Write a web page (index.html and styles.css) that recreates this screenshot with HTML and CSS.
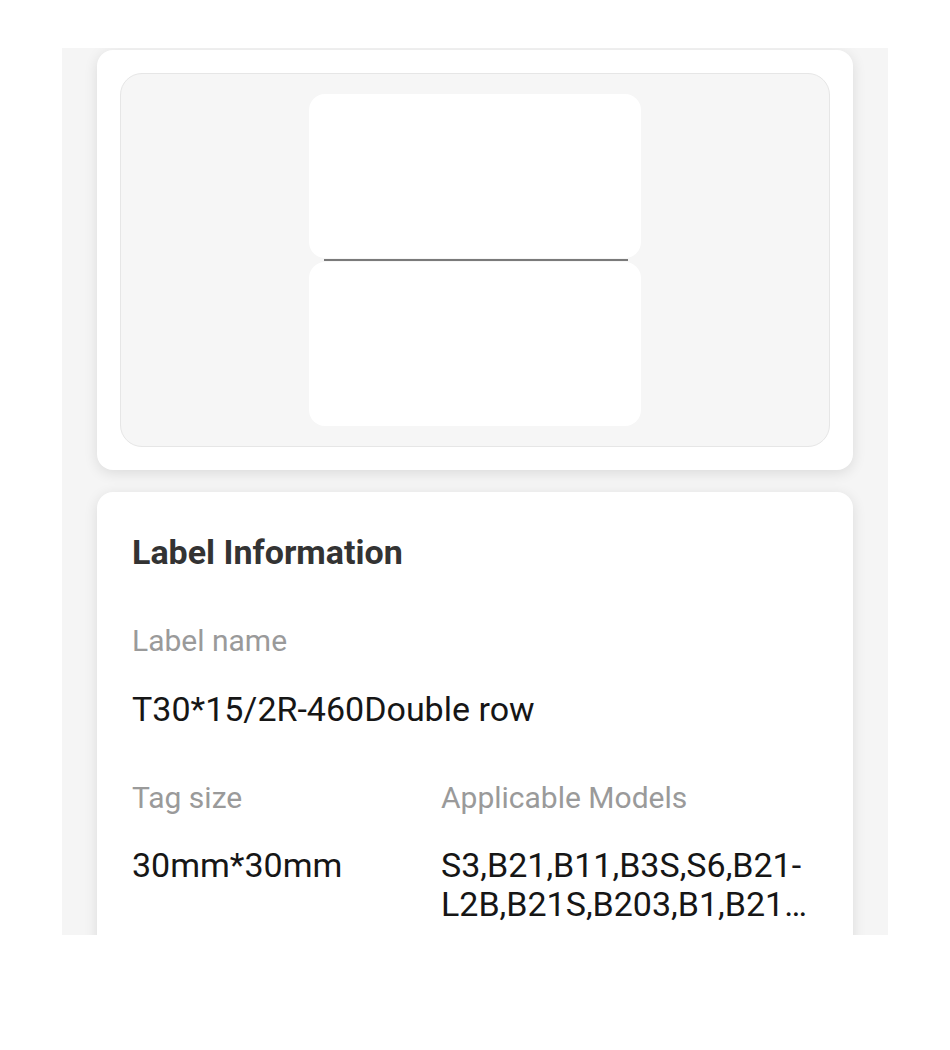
FILE: index.html
```html
<!DOCTYPE html>
<html lang="en">
<head>
    <meta charset="UTF-8">
    <meta name="viewport" content="width=device-width, initial-scale=1.0">
    <title>Label Information</title>
    <link rel="stylesheet" href="styles.css">
</head>
<body>
    <div class="panel">
        <div class="card preview-card">
            <div class="preview">
                <div class="paper">
                    <div class="tag"></div>
                    <div class="cut"></div>
                    <div class="tag"></div>
                </div>
            </div>
        </div>
        <div class="card info-card">
            <div class="title">Label Information</div>
            <div class="caption first">Label name</div>
            <div class="value">T30*15/2R-460Double row</div>
            <div class="info-grid">
                <div class="caption">Tag size</div>
                <div class="caption">Applicable Models</div>
                <div class="value">30mm*30mm</div>
                <div class="value models">S3,B21,B11,B3S,S6,B21-L2B,B21S,B203,B1,B21 C2B,B21 C2W,B3S-P,B1-N,B21-L2W</div>
            </div>
        </div>
    </div>
</body>
</html>
```

FILE: styles.css
```css
body{
    margin: 0;
    background-color: #ffffff;
    font-family: Roboto, "Noto Sans", sans-serif;
}
.panel{
    width: 756px;
    height: 885px;
    margin: 48px auto 0 auto;
    padding: 2px 35px 0 35px;
    background-color: #f5f5f5;
    overflow: hidden;
}
.card{
    background-color: #ffffff;
    border-radius: 16px;
    box-shadow: 0 3px 14px rgba(0, 0, 0, 0.11);
}
.preview-card{
    padding: 23px;
}
.preview{
    height: 372px;
    border: 1px solid #e6e6e6;
    border-radius: 22px;
    background-color: #f6f6f6;
    display: flex;
    justify-content: center;
    align-items: center;
}
.paper{
    width: 332px;
    display: flex;
    flex-direction: column;
    gap: 1px;
}
.tag{
    height: 164px;
    background-color: #ffffff;
    border-radius: 16px;
}
.cut{
    height: 2px;
    margin: 0 13px 0 15px;
    background-color: #7a7a7a;
}
.info-card{
    margin-top: 22px;
    padding: 40px 35px 40px 35px;
}
.title{
    font-size: 34px;
    line-height: 40px;
    font-weight: bold;
    color: #333333;
}
.caption{
    font-size: 30px;
    line-height: 36px;
    color: #9a9a9a;
}
.caption.first{
    margin-top: 51px;
}
.value{
    font-size: 34px;
    line-height: 40px;
    color: #161616;
    margin-top: 30px;
}
.info-grid{
    margin-top: 51px;
    display: grid;
    grid-template-columns: 309px 1fr;
}
.info-grid .value{
    line-height: 39px;
    margin-top: 30px;
}
.models{
    display: -webkit-box;
    -webkit-box-orient: vertical;
    -webkit-line-clamp: 2;
    overflow: hidden;
}
```
